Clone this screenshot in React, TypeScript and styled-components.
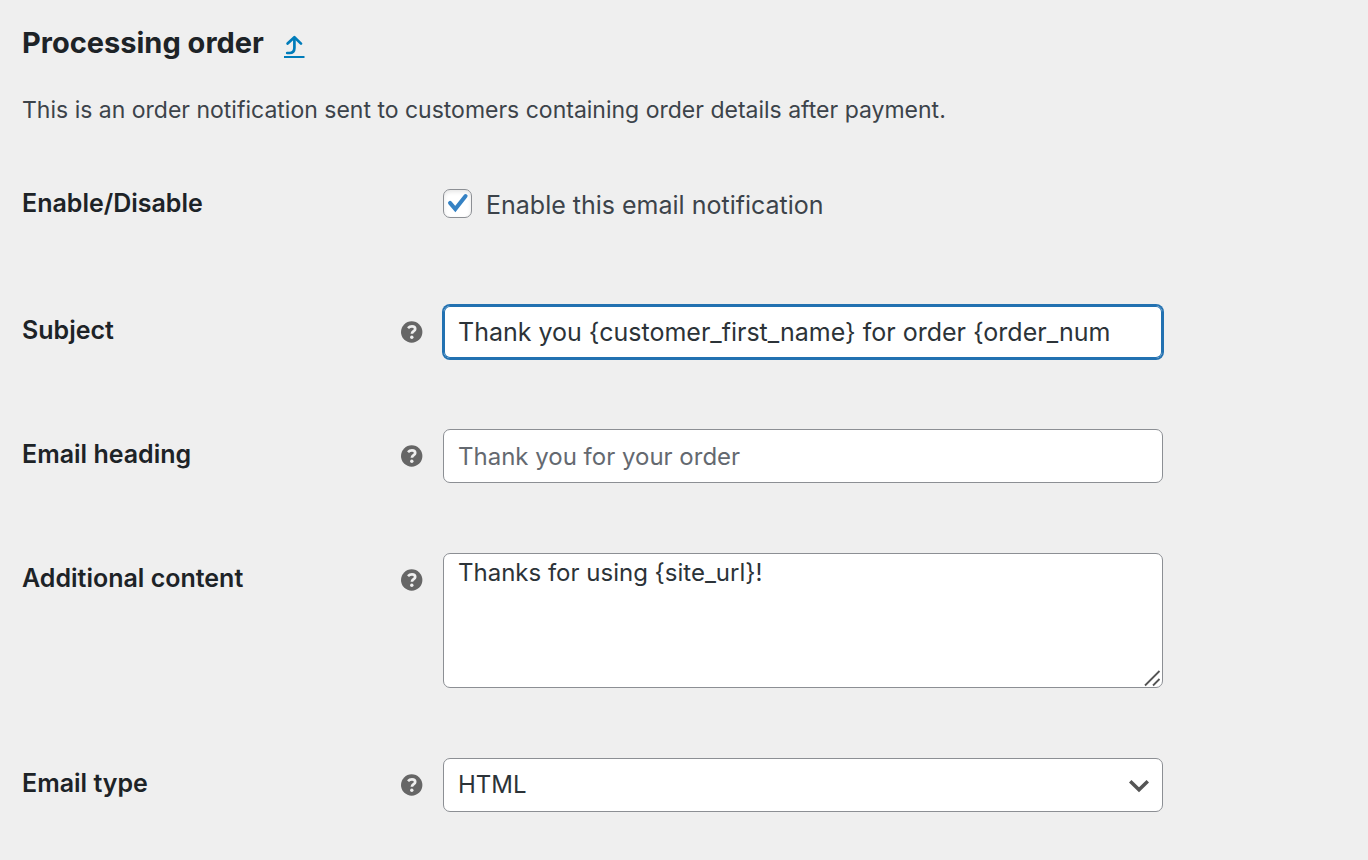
import React from "react";
import styled, { createGlobalStyle } from "styled-components";

const GlobalStyle = createGlobalStyle`
  *, *::before, *::after { box-sizing: border-box; }
  body {
    margin: 0;
    background: #efefef;
    color: #3c434a;
    font-family: Inter, "Liberation Sans", sans-serif;
    font-size: 25px;
    line-height: 32px;
  }
`;

const Page = styled.main`
  padding: 23px 22px 48px;
`;

const TitleRow = styled.header`
  display: flex;
  align-items: center;
  gap: 20px;
`;

const Title = styled.h2`
  margin: 0;
  color: #1d2327;
  font-size: 29px;
  font-weight: 700;
  line-height: 40px;
`;

const BackLink = styled.a`
  display: block;
  height: 24px;
  margin-top: 8px;
  color: #007cba;
  svg { display: block; }
`;

const Description = styled.p`
  margin: 31px 0 63px;
  font-size: 23px;
`;

const Form = styled.form`
  display: grid;
  gap: 70px;
`;

const Row = styled.div`
  display: grid;
  grid-template-columns: 421px minmax(0, 720px);
  align-items: start;
`;

const LabelCell = styled.div`
  display: flex;
  align-items: center;
  justify-content: space-between;
  padding: 9px 20px 0 0;
`;

const Label = styled.label`
  color: #1d2327;
  font-weight: 600;
`;

const ToggleRow = styled(Row)`
  min-height: 46px;
`;

const ToggleName = styled.span`
  color: #1d2327;
  font-weight: 600;
  line-height: 28px;
`;

const HelpIcon = styled.svg`
  display: block;
  margin-top: 4px;
`;

const CheckLabel = styled.label`
  display: flex;
  align-items: flex-start;
  gap: 14px;
`;

const CheckBox = styled.span`
  display: grid;
  width: 29px;
  height: 29px;
  svg { grid-area: 1 / 1; pointer-events: none; visibility: hidden; z-index: 1; }
  input:checked + svg { visibility: visible; }
`;

const CheckInput = styled.input`
  grid-area: 1 / 1;
  appearance: none;
  width: 29px;
  height: 29px;
  margin: 0;
  border: 1px solid #8c8f94;
  border-radius: 7px;
  background: #fff;
  box-shadow: inset 0 2px 4px rgba(0, 0, 0, 0.1);
`;

const control = `
  display: block;
  width: 100%;
  margin: 0;
  padding: 0 14px;
  border: 1px solid #8c8f94;
  border-radius: 7px;
  outline: none;
  background: #fff;
  color: #2c3338;
  font: inherit;
  font-size: 24px;
`;

const TextInput = styled.input<{ $active?: boolean }>`
  ${control}
  height: 54px;
  font-size: ${(p) => (p.$active ? "25px" : "24px")};
  border-color: ${(p) => (p.$active ? "#2271b1" : "#8c8f94")};
  box-shadow: ${(p) => (p.$active ? "0 0 0 1px #2271b1, inset 0 0 0 1px #2271b1" : "none")};
  &::placeholder { color: #646970; opacity: 1; }
`;

const Field = styled.div`
  position: relative;
`;

const TextArea = styled.textarea`
  ${control}
  height: 135px;
  padding-top: 3px;
  resize: none;
`;

const Grip = styled.svg`
  position: absolute;
  right: 1px;
  bottom: 1px;
  pointer-events: none;
`;

const Select = styled.select`
  ${control}
  height: 54px;
  appearance: none;
`;

const Chevron = styled.svg`
  position: absolute;
  right: 14px;
  top: 21px;
  pointer-events: none;
`;

const Help = () => (
  <HelpIcon width="22" height="22" viewBox="0 0 22 22" role="img" aria-label="Help">
    <circle cx="10.7" cy="11" r="10.7" fill="#666" />
    <path d="M7 7.2C8 6.1 9.3 5.4 11 5.4c2 0 3.2 1 3.2 2.5 0 2.2-3.3 2.2-3.3 4.9" fill="none" stroke="#efefef" strokeWidth="2.7" />
    <circle cx="10.8" cy="16.3" r="1.7" fill="#efefef" />
  </HelpIcon>
);

const FieldRow = ({ id, label, children }: { id: string; label: string; children: React.ReactNode }) => (
  <Row>
    <LabelCell>
      <Label htmlFor={id}>{label}</Label>
      <Help />
    </LabelCell>
    <Field>{children}</Field>
  </Row>
);

export default function App() {
  return (
    <>
      <GlobalStyle />
      <Page>
        <TitleRow>
          <Title>Processing order</Title>
          <BackLink href="#emails" aria-label="Return to emails">
            <svg width="21" height="24" viewBox="0 0 21 24" fill="none" stroke="currentColor">
              <path d="M3.2 18H5.4C8.9 18 10.4 16.6 10.4 13V3.2" strokeWidth="2.7" strokeLinecap="round" />
              <path d="M3.6 8.6L10.4 2.2L17 8.6" strokeWidth="2.7" strokeLinecap="round" strokeLinejoin="round" />
              <path d="M0 22H20.5" strokeWidth="2" />
            </svg>
          </BackLink>
        </TitleRow>
        <Description>
          This is an order notification sent to customers containing order details after payment.
        </Description>
        <Form>
          <ToggleRow>
            <ToggleName>Enable/Disable</ToggleName>
            <CheckLabel>
              <CheckBox>
                <CheckInput type="checkbox" defaultChecked />
                <svg width="29" height="29" viewBox="0 0 29 29">
                  <path d="M7 13.9L12.3 20L22.6 7" fill="none" stroke="#3582c4" strokeWidth="4" strokeLinecap="round" />
                </svg>
              </CheckBox>
              Enable this email notification
            </CheckLabel>
          </ToggleRow>
          <FieldRow id="subject" label="Subject">
            <TextInput id="subject" type="text" $active defaultValue="Thank you {customer_first_name} for order {order_num" />
          </FieldRow>
          <FieldRow id="heading" label="Email heading">
            <TextInput id="heading" type="text" placeholder="Thank you for your order" />
          </FieldRow>
          <FieldRow id="content" label="Additional content">
            <TextArea id="content" defaultValue="Thanks for using {site_url}!" />
            <Grip width="18" height="18" viewBox="0 0 18 18" stroke="#555" strokeWidth="1.8">
              <path d="M1 16.5L15.5 2M9 16.5L15.5 10" />
            </Grip>
          </FieldRow>
          <FieldRow id="type" label="Email type">
            <Select id="type" defaultValue="html">
              <option value="html">HTML</option>
              <option value="plain">Plain text</option>
              <option value="multipart">Multipart</option>
            </Select>
            <Chevron width="20" height="14" viewBox="0 0 20 14" fill="none" stroke="#555" strokeWidth="3.6">
              <path d="M1.2 2.2L10 10.8L18.8 2.2" />
            </Chevron>
          </FieldRow>
        </Form>
      </Page>
    </>
  );
}
